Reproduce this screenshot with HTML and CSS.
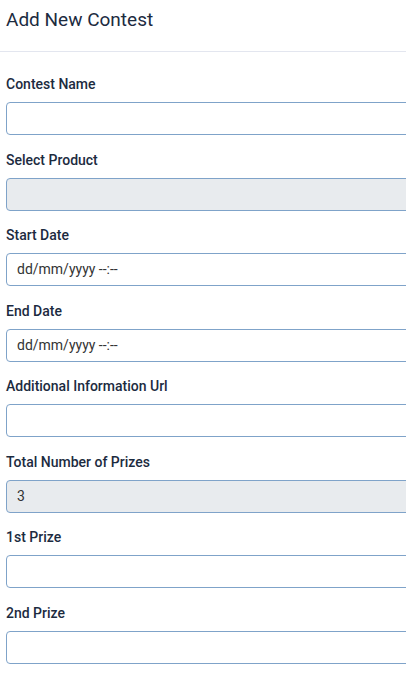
FILE: index.html
```html
<!DOCTYPE html>
<html lang="en">
<head>
    <meta charset="UTF-8">
    <meta name="viewport" content="width=device-width, initial-scale=1.0">
    <title>Add New Contest</title>
    <link rel="stylesheet" href="styles.css">
</head>
<body>
    <div class="modal">
        <header class="modal-header">
            <h4>Add New Contest</h4>
        </header>
        <form class="modal-body">
            <div class="form-group">
                <label for="contest-name">Contest Name</label>
                <input type="text" id="contest-name" class="form-control">
            </div>
            <div class="form-group">
                <label for="product">Select Product</label>
                <div id="product" class="form-control disabled"></div>
            </div>
            <div class="form-group">
                <label for="start-date">Start Date</label>
                <div id="start-date" class="form-control">dd/mm/yyyy --:--</div>
            </div>
            <div class="form-group">
                <label for="end-date">End Date</label>
                <div id="end-date" class="form-control">dd/mm/yyyy --:--</div>
            </div>
            <div class="form-group">
                <label for="info-url">Additional Information Url</label>
                <input type="text" id="info-url" class="form-control">
            </div>
            <div class="form-group">
                <label for="total-prizes">Total Number of Prizes</label>
                <div id="total-prizes" class="form-control disabled">3</div>
            </div>
            <div class="form-group">
                <label for="prize-1">1st Prize</label>
                <input type="text" id="prize-1" class="form-control">
            </div>
            <div class="form-group">
                <label for="prize-2">2nd Prize</label>
                <input type="text" id="prize-2" class="form-control">
            </div>
        </form>
    </div>
</body>
</html>
```

FILE: styles.css
```css
body {
    font-family: Roboto, "Liberation Sans", sans-serif;
    margin: 0;
    padding: 0;
    background-color: #fff;
    color: #1c2b3f;
    overflow: hidden;
}
.modal {
    width: 406px;
    overflow: hidden;
}
.modal-header {
    height: 52px;
    border-bottom: 1px solid #e3e6ef;
    box-sizing: border-box;
    padding: 8px 6px 0;
}
.modal-header h4 {
    margin: 0;
    font-size: 19px;
    font-weight: 400;
    line-height: 24px;
    color: #1c2b3f;
}
.modal-body {
    padding: 22px 6px 0;
}
.form-group {
    margin-bottom: 14.5px;
}
.form-group label {
    display: block;
    font-size: 14px;
    font-weight: 500;
    line-height: 20px;
    margin-bottom: 8px;
}
.form-control {
    display: block;
    box-sizing: border-box;
    width: 420px;
    height: 33px;
    padding: 0 10px;
    border: 1px solid #7fa3c9;
    border-radius: 4px;
    background-color: #fff;
    font-family: inherit;
    font-size: 14px;
    line-height: 31px;
    color: #333;
}
.form-control.disabled {
    background-color: #e8ebee;
}
```
